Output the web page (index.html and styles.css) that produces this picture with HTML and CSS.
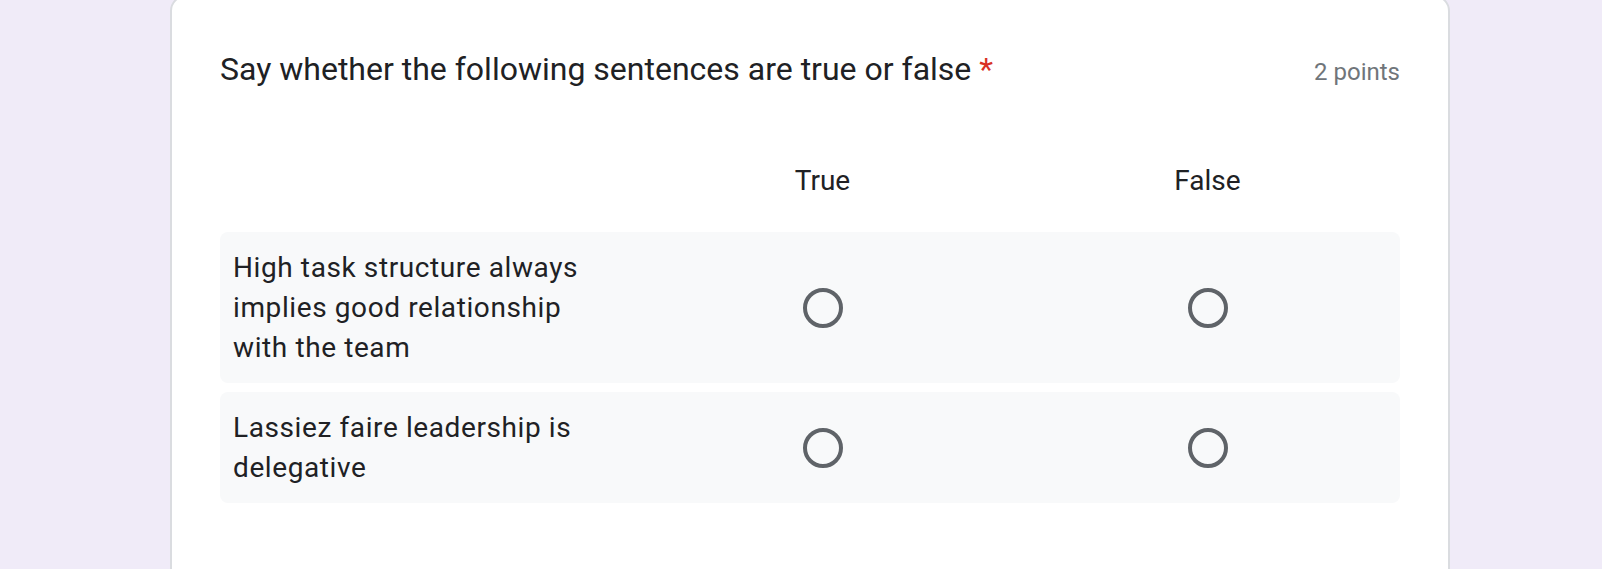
FILE: index.html
```html
<!DOCTYPE html>
<html lang="en">
<head>
<meta charset="utf-8">
<title>Quiz question</title>
<link rel="stylesheet" href="styles.css">
</head>
<body>
<div class="card">
  <div class="q-head">
    <div class="q-title">Say whether the following sentences are true or false<span class="req">*</span></div>
    <div class="q-points">2 points</div>
  </div>
  <div class="grid-head">
    <div></div>
    <div class="col-label">True</div>
    <div class="col-label">False</div>
  </div>
  <div class="grid-rows">
    <div class="grid-row">
      <div class="row-label">High task structure always implies good relationship with the team</div>
      <div class="cell"><span class="radio"></span></div>
      <div class="cell"><span class="radio"></span></div>
    </div>
    <div class="grid-row">
      <div class="row-label">Lassiez faire leadership is delegative</div>
      <div class="cell"><span class="radio"></span></div>
      <div class="cell"><span class="radio"></span></div>
    </div>
  </div>
</div>
</body>
</html>
```

FILE: styles.css
```css
html, body {
  margin: 0;
  padding: 0;
  height: 569px;
  overflow: hidden;
  background: #f0ebf8;
  font-family: Roboto, "Liberation Sans", sans-serif;
  color: #202124;
}

.card {
  box-sizing: border-box;
  width: 1280px;
  margin: -5px 0 0 170px;
  background: #fff;
  border: 2px solid #dadce0;
  border-radius: 16px;
  padding: 48px 48px 120px;
}

.q-head {
  display: flex;
  justify-content: space-between;
  align-items: baseline;
}

.q-title {
  font-size: 32px;
  line-height: 48px;
}

.req {
  color: #d93025;
  padding-left: 8px;
}

.q-points {
  font-size: 24px;
  line-height: 32px;
  color: #70757a;
}

.grid-head,
.grid-row {
  display: grid;
  grid-template-columns: 410px 1fr 1fr;
}

.grid-head {
  margin-top: 68px;
  margin-bottom: 31px;
}

.col-label {
  text-align: center;
  font-size: 28px;
  line-height: 40px;
}

.grid-rows {
  display: flex;
  flex-direction: column;
  gap: 9px;
}

.grid-row {
  background: #f8f9fa;
  border-radius: 8px;
  align-items: center;
}

.row-label {
  padding: 16px 40px 15px 13px;
  font-size: 28px;
  line-height: 40px;
  letter-spacing: 0.6px;
}

.cell {
  display: flex;
  justify-content: center;
  align-items: center;
}

.radio {
  box-sizing: border-box;
  width: 40px;
  height: 40px;
  border: 4px solid #5f6368;
  border-radius: 50%;
}
```
